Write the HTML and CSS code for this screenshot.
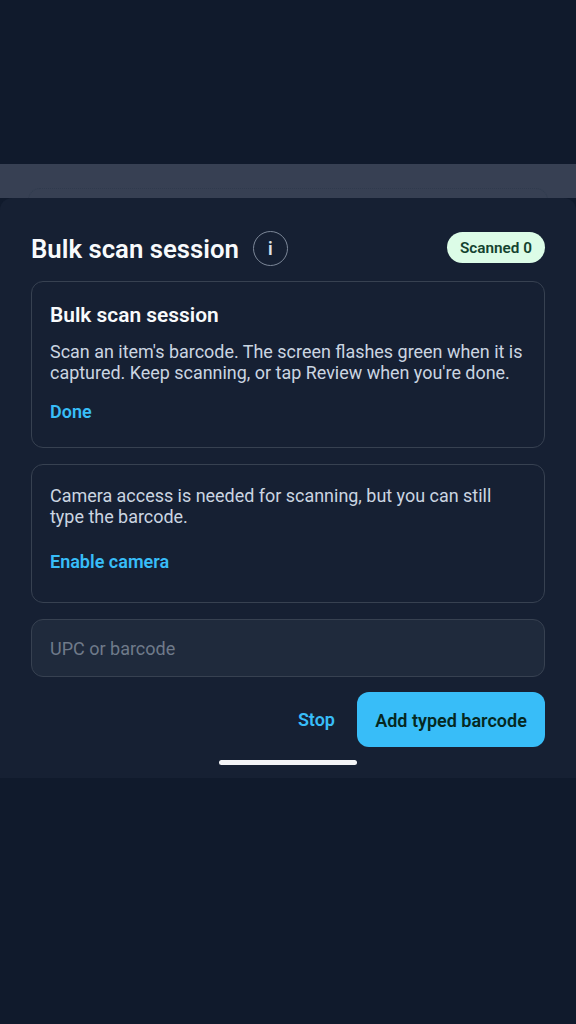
FILE: index.html
```html
<!DOCTYPE html>
<html lang="en">
<head>
    <meta charset="UTF-8">
    <title>Bulk scan session</title>
    <link rel="stylesheet" href="styles.css">
</head>
<body>

<div class="top_space"></div>

<div class="backdrop">
    <div class="ghost_card"></div>
</div>

<div class="sheet">
    <div class="sheet_head">
        <h1 class="sheet_title">Bulk scan session</h1>
        <div class="info_btn">i</div>
        <div class="badge">Scanned 0</div>
    </div>

    <div class="card card_help">
        <h2 class="card_title">Bulk scan session</h2>
        <p class="card_text">Scan an item's barcode. The screen flashes green when it is captured. Keep scanning, or tap Review when you're done.</p>
        <a class="link">Done</a>
    </div>

    <div class="card card_camera">
        <p class="card_text">Camera access is needed for scanning, but you can still type the barcode.</p>
        <a class="link">Enable camera</a>
    </div>

    <div class="barcode_input">UPC or barcode</div>

    <div class="actions">
        <a class="link">Stop</a>
        <div class="primary_btn">Add typed barcode</div>
    </div>

    <div class="home_bar"></div>
</div>

</body>
</html>
```
FILE: styles.css
```css
* {
    box-sizing: border-box;
}
html, body {
    margin: 0;
    padding: 0;
}
body {
    width: 576px;
    height: 1024px;
    background: #101a2c;
    font-family: Roboto, "Liberation Sans", sans-serif;
    overflow: hidden;
}
.top_space {
    height: 164px;
}
.backdrop {
    height: 34px;
    background: #374053;
    padding: 24px 28px 0;
    overflow: hidden;
}
.ghost_card {
    height: 30px;
    border: 1px dotted #2f3a4d;
    border-radius: 12px;
}

/* sheet */
.sheet {
    height: 580px;
    background: #162033;
    border-radius: 12px 12px 0 0;
    padding: 33px 31px 0;
}
.sheet_head {
    display: flex;
    align-items: center;
    height: 35px;
    margin-bottom: 15px;
}
.sheet_title {
    margin: 0;
    font-size: 25.75px;
    font-weight: 600;
    color: #f8fafc;
}
.info_btn {
    width: 35px;
    height: 35px;
    margin-left: 14px;
    border: 1px solid #7c8798;
    border-radius: 50%;
    color: #dbe2ea;
    font-size: 18px;
    font-weight: 600;
    line-height: 33px;
    text-align: center;
}
.badge {
    margin-left: auto;
    margin-bottom: 2px;
    width: 98px;
    height: 31px;
    background: #dcfce7;
    border-radius: 16px;
    color: #14432f;
    font-size: 15.3px;
    font-weight: 600;
    line-height: 33px;
    text-align: center;
}

/* cards */
.card {
    border: 1px solid #374151;
    border-radius: 12px;
    padding: 19px 18px 0;
    margin-bottom: 16px;
}
.card_help {
    height: 167px;
}
.card_camera {
    height: 139px;
    padding-top: 20px;
}
.card_title {
    margin: 0 0 12px;
    font-size: 20.9px;
    line-height: 28px;
    font-weight: 600;
    color: #f8fafc;
}
.card_text {
    margin: 0 0 17px;
    font-size: 17.94px;
    line-height: 21px;
    color: #cbd5e1;
}
.card_camera .card_text {
    margin-bottom: 23px;
}
.link {
    display: block;
    font-size: 18px;
    line-height: 24px;
    font-weight: 600;
    color: #38bdf8;
}

.barcode_input {
    height: 58px;
    background: #1f2a3c;
    border: 1px solid #374151;
    border-radius: 12px;
    padding: 0 18px;
    color: #6f7a8a;
    font-size: 18px;
    line-height: 58px;
}

.actions {
    display: flex;
    justify-content: flex-end;
    align-items: center;
    gap: 22px;
    margin-top: 15px;
}
.actions .link {
    margin-top: 1px;
}
.primary_btn {
    width: 188px;
    height: 55px;
    background: #38bdf8;
    border-radius: 12px;
    color: #06281f;
    font-size: 18px;
    font-weight: 600;
    line-height: 57px;
    text-align: center;
}
.home_bar {
    width: 138px;
    height: 5px;
    margin: 13px auto 0;
    background: #f3f4f6;
    border-radius: 3px;
}
```
